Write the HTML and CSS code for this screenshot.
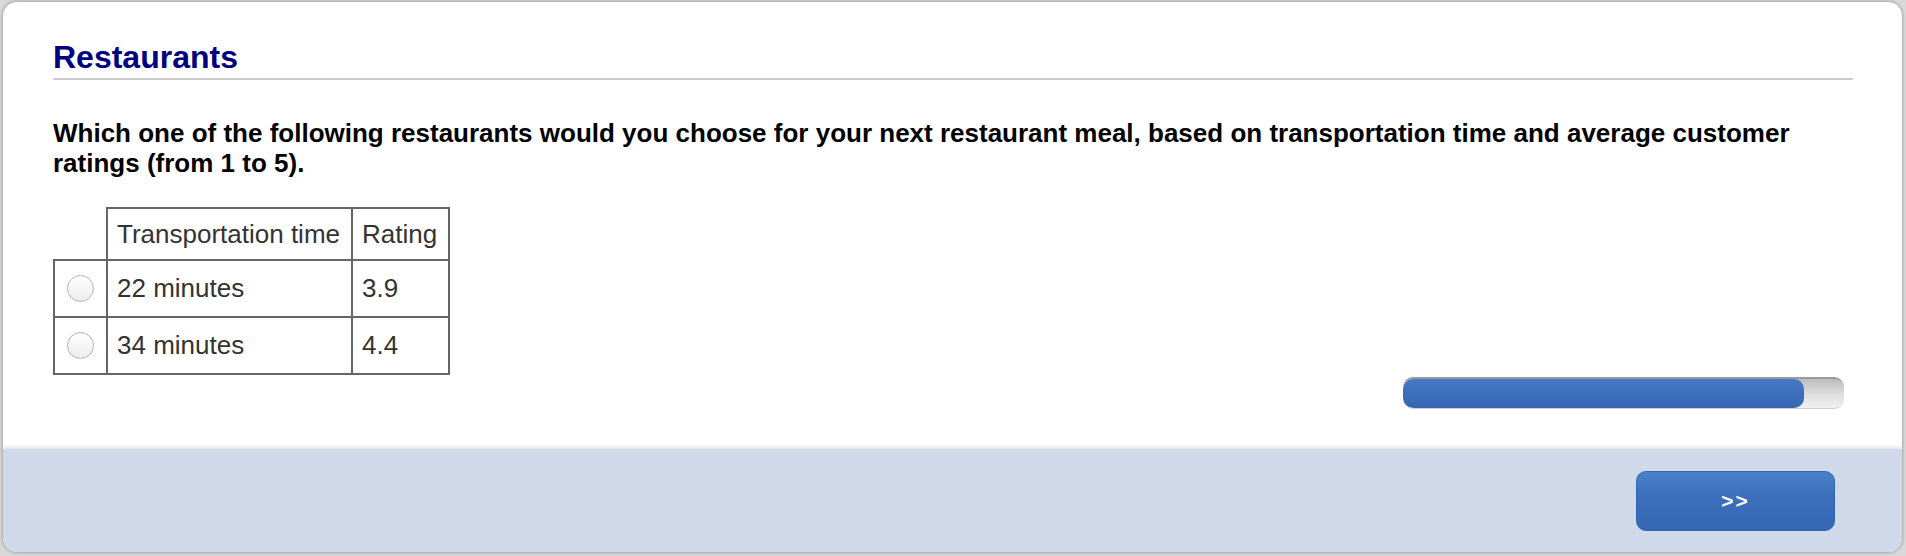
FILE: index.html
```html
<!DOCTYPE html>
<html lang="en">
<head>
<meta charset="utf-8">
<title>Restaurants</title>
<link rel="stylesheet" href="styles.css">
</head>
<body>
<div class="card">
  <div class="content">
    <h1 class="title">Restaurants</h1>
    <p class="question">Which one of the following restaurants would you choose for your next restaurant meal, based on transportation time and average customer ratings (from 1 to 5).</p>
    <table class="choices">
      <thead>
        <tr>
          <th class="blank"></th>
          <th class="col-time">Transportation time</th>
          <th class="col-rating">Rating</th>
        </tr>
      </thead>
      <tbody>
        <tr>
          <td class="pick"><input type="radio" name="r" class="radio"></td>
          <td>22 minutes</td>
          <td>3.9</td>
        </tr>
        <tr>
          <td class="pick"><input type="radio" name="r" class="radio"></td>
          <td>34 minutes</td>
          <td>4.4</td>
        </tr>
      </tbody>
    </table>
    <div class="progress-row">
      <div class="progress"><div class="progress-fill" style="width: 91%"></div></div>
    </div>
  </div>
  <div class="footer">
    <button class="next" type="button">&gt;&gt;</button>
  </div>
</div>
</body>
</html>
```
FILE: styles.css
```css
html, body {
  margin: 0;
  padding: 0;
}
body {
  background: #d9d9d9;
  font-family: "Liberation Sans", Arial, Helvetica, sans-serif;
  width: 1906px;
  height: 556px;
  overflow: hidden;
}
.card {
  margin: 2px 4px 4px 3px;
  height: 550px;
  background: #fff;
  border-radius: 14px;
  overflow: hidden;
  display: flex;
  flex-direction: column;
  box-shadow: 0 0 3px 1px rgba(0, 0, 0, 0.25);
}
.content {
  flex: 1;
  padding: 37px 49px 0 50px;
}
.title {
  margin: 0;
  font-size: 32px;
  line-height: 37px;
  font-weight: bold;
  color: #000080;
  padding-bottom: 2px;
  border-bottom: 2px solid #cccccc;
}
.question {
  margin: 38px 0 29px;
  font-size: 26px;
  line-height: 30px;
  font-weight: bold;
  color: #000;
}
.choices {
  border-collapse: collapse;
  font-size: 26px;
  color: #333;
}
.choices th, .choices td {
  border: 2px solid #666;
  padding: 0 9px;
  text-align: left;
  font-weight: normal;
  vertical-align: middle;
  white-space: nowrap;
}
.choices th {
  height: 50px;
}
.choices td {
  height: 55px;
}
.choices th.blank {
  border-top: none;
  border-left: none;
  width: 34px;
}
.choices .col-time { width: 225px; }
.choices .col-rating { width: 77px; }
.choices td.pick {
  text-align: center;
  padding: 0;
}
.radio {
  appearance: none;
  -webkit-appearance: none;
  display: block;
  margin: 0 auto;
  width: 27px;
  height: 27px;
  border-radius: 50%;
  border: 1px solid #b4b4b4;
  background: linear-gradient(#ffffff, #ececec);
  box-shadow: inset 0 1px 1px rgba(255, 255, 255, 0.9);
}
.progress-row {
  display: flex;
  justify-content: flex-end;
  margin-top: 2px;
  padding-right: 9px;
}
.progress {
  width: 441px;
  height: 32px;
  box-sizing: border-box;
  border-radius: 10px;
  border-top: 2px solid #9a9a9a;
  border-bottom: 1px solid #cfcfcf;
  background: linear-gradient(#bdbdbd, #e2e2e2 60%, #f0f0f0);
  overflow: hidden;
}
.progress-fill {
  height: 100%;
  border-radius: 10px;
  background: linear-gradient(#4679c5, #3566b4);
}
.footer {
  height: 103px;
  flex: none;
  background: #cfd9ea;
  box-shadow: 0 -2px 4px rgba(0, 0, 0, 0.12);
  display: flex;
  justify-content: flex-end;
  align-items: flex-start;
  padding: 22px 67px 0 0;
  box-sizing: border-box;
}
.next {
  width: 199px;
  height: 60px;
  border-radius: 10px;
  border: 1px solid #3466b0;
  background: linear-gradient(#4a80c9, #3d6fbd 40%, #3566b3);
  color: #fff;
  font-family: "Liberation Sans", Arial, sans-serif;
  font-weight: bold;
  font-size: 21px;
  letter-spacing: 2px;
  padding: 0;
  cursor: pointer;
}
```
